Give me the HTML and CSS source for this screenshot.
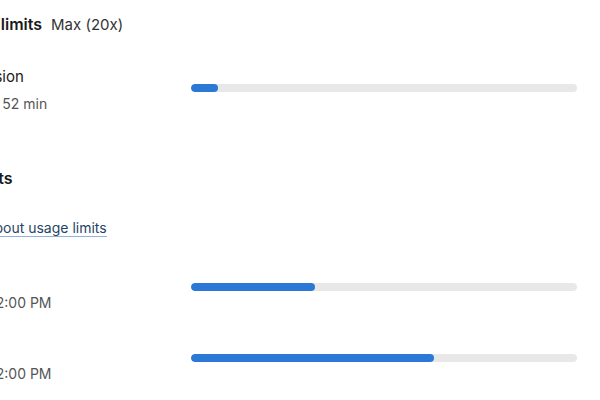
FILE: index.html
```html
<!DOCTYPE html>
<html lang="en">
<head>
    <meta charset="UTF-8">
    <meta name="viewport" content="width=device-width, initial-scale=1.0">
    <title>Usage</title>
    <link rel="stylesheet" href="styles.css">
</head>
<body>
    <div class="usage-page">
        <div class="plan-header">
            <h2>Plan usage limits</h2>
            <span class="plan-name">Max (20x)</span>
        </div>

        <div class="usage-row first-row">
            <div class="row-info">
                <div class="row-label">Current session</div>
                <div class="row-sub">Resets in 4 hr 52 min</div>
            </div>
            <div class="bar"><div class="bar-fill" style="width: 7%"></div></div>
        </div>

        <h3 class="section-title">Weekly limits</h3>
        <a class="learn-link" href="#">Learn more about usage limits</a>

        <div class="usage-row">
            <div class="row-info">
                <div class="row-label">All models</div>
                <div class="row-sub">Resets Wed 12:00 PM</div>
            </div>
            <div class="bar"><div class="bar-fill" style="width: 32%"></div></div>
        </div>

        <div class="usage-row">
            <div class="row-info">
                <div class="row-label">Opus only</div>
                <div class="row-sub">Resets Wed 12:00 PM</div>
            </div>
            <div class="bar"><div class="bar-fill" style="width: 63%"></div></div>
        </div>
    </div>
</body>
</html>
```

FILE: styles.css
```css
body {
    margin: 0;
    padding: 0;
    font-family: Inter, "Open Sans", sans-serif;
    color: #1a1a1a;
    background: #fff;
    overflow: hidden;
}
.usage-page {
    width: 665px;
    margin-left: -88px;
    padding-top: 14px;
}
.plan-header {
    display: flex;
    align-items: baseline;
    gap: 9px;
}
.plan-header h2 {
    margin: 0;
    font-size: 16px;
    font-weight: 600;
}
.plan-name {
    font-size: 15px;
    color: #333;
}
.usage-row {
    display: flex;
    align-items: center;
    margin-top: 23px;
}
.first-row {
    margin-top: 32px;
}
.row-info {
    flex: 1;
}
.row-label {
    font-size: 15px;
    line-height: 22px;
}
.row-sub {
    margin: 6px 0 0 -4px;
    font-size: 14px;
    line-height: 20px;
    color: #555;
}
.bar {
    width: 386px;
    height: 8px;
    margin-bottom: 4px;
    border-radius: 4px;
    background: #e8e8e8;
    overflow: hidden;
}
.bar-fill {
    height: 100%;
    border-radius: 4px;
    background: #2b78d6;
}
.section-title {
    margin: 54px 0 0 -2px;
    font-size: 16px;
    font-weight: 600;
}
.learn-link {
    display: inline-block;
    margin: 31px 0 5px -5px;
    font-size: 14px;
    color: #1f4466;
    text-decoration: none;
    border-bottom: 1px solid #8fb3d9;
}
```
